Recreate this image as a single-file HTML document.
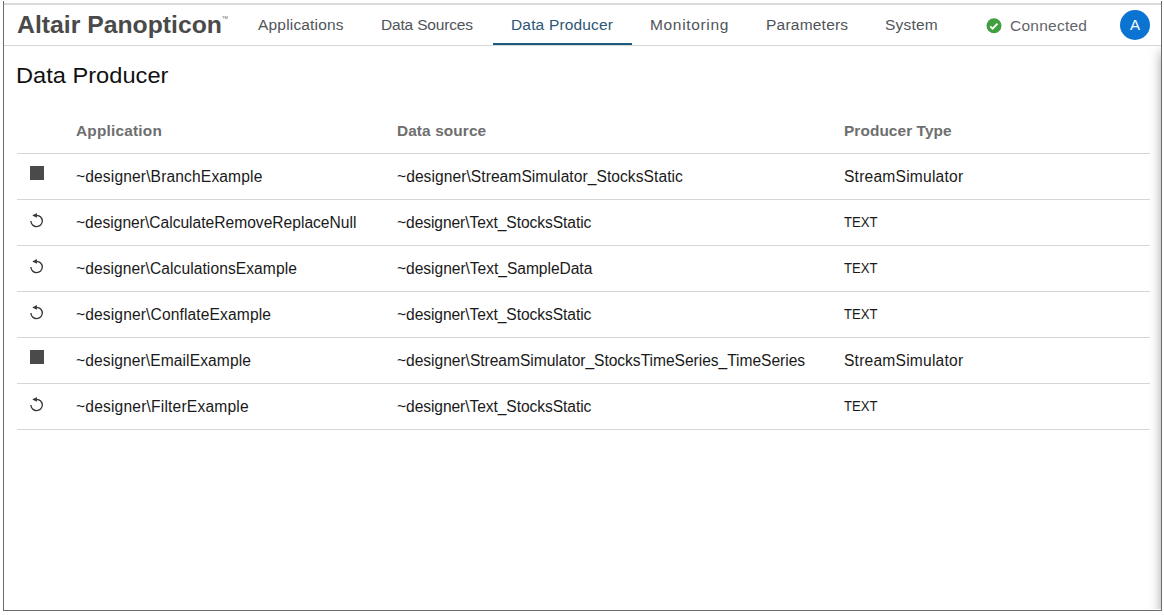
<!DOCTYPE html>
<html><head><meta charset="utf-8">
<style>
html,body{margin:0;padding:0;background:#fff;}
body{width:1164px;height:615px;position:relative;overflow:hidden;font-family:"Liberation Sans",sans-serif;}
.a{position:absolute;white-space:nowrap;line-height:1;}
#fl{position:absolute;left:3px;top:1px;width:1px;height:610px;background:#6b6b6b;}
#fr{position:absolute;left:1161px;top:1px;width:1px;height:610px;background:#6b6b6b;}
#fb{position:absolute;left:3px;top:610px;width:1159px;height:1px;background:#6b6b6b;}
#ftop{position:absolute;left:4px;top:3px;width:1157px;height:2px;background:#d8d9db;}
#navb{position:absolute;left:4px;top:45px;width:1157px;height:1px;background:#d2d6d8;}
#shadow{position:absolute;left:1130px;top:46px;width:31px;height:563px;overflow:hidden;}
#shadow div{position:absolute;left:31px;top:6px;width:40px;height:620px;background:#ccc;box-shadow:0 0 11px 0 rgba(0,0,0,0.36);}
.rb{position:absolute;left:17px;width:1133px;height:1px;background:#d6d6d6;}
.stop{position:absolute;left:30px;width:14px;height:14px;background:#4a4a4a;}
.ref{position:absolute;left:27px;width:20px;height:20px;}
</style></head><body>
<div id="ftop"></div>
<div id="navb"></div>
<div id="shadow"><div></div></div>
<div class="a" id="tm" style="left:222px;top:16px;font-size:4px;color:#555;">TM</div>
<div style="position:absolute;left:493px;top:43px;width:139px;height:2px;background:#1c5a80;"></div>
<svg style="position:absolute;left:986px;top:17.5px;" width="16" height="16" viewBox="0 0 16 16"><circle cx="8" cy="7.8" r="7.5" fill="#40a03f"/><path d="M4.3 8.3 L6.6 10.6 L11.5 5.7" stroke="#fff" stroke-width="1.9" fill="none" stroke-linecap="butt" stroke-linejoin="miter"/></svg>
<div style="position:absolute;left:1120px;top:10px;width:30px;height:30px;border-radius:50%;background:#0b73d2;"></div>
<div class="a" style="left:1127px;top:17.3px;width:16px;text-align:center;font-size:15px;color:#fff;">A</div>
<div class="rb" style="top:153px;"></div>
<div class="a" id="logo" style="left:17px;top:14px;font-size:23.5px;color:#4a4a4a;letter-spacing:0.000px;font-weight:bold;transform:scaleX(1.0533);transform-origin:0 0;">Altair Panopticon</div>
<div class="a" id="n1" style="left:258px;top:17px;font-size:15.5px;color:#4f5459;letter-spacing:0.182px;">Applications</div>
<div class="a" id="n2" style="left:381px;top:17px;font-size:15.5px;color:#4f5459;letter-spacing:-0.182px;">Data Sources</div>
<div class="a" id="n3" style="left:511px;top:17px;font-size:15.5px;color:#2c5676;letter-spacing:0.167px;">Data Producer</div>
<div class="a" id="n4" style="left:650px;top:17px;font-size:15.5px;color:#4f5459;letter-spacing:0.667px;">Monitoring</div>
<div class="a" id="n5" style="left:766px;top:17px;font-size:15.5px;color:#4f5459;letter-spacing:0.222px;">Parameters</div>
<div class="a" id="n6" style="left:885px;top:17px;font-size:15.5px;color:#4f5459;letter-spacing:0.200px;">System</div>
<div class="a" id="conn" style="left:1010px;top:18px;font-size:15.5px;color:#62666a;letter-spacing:0.250px;">Connected</div>
<div class="a" id="title" style="left:16px;top:65px;font-size:22px;color:#111;letter-spacing:0.000px;transform:scaleX(1.0743);transform-origin:0 0;">Data Producer</div>
<div class="a" id="h1" style="left:76px;top:123px;font-size:15.4px;color:#6e6e6e;letter-spacing:0.200px;font-weight:bold;">Application</div>
<div class="a" id="h2" style="left:397px;top:123px;font-size:15.4px;color:#6e6e6e;letter-spacing:0.100px;font-weight:bold;">Data source</div>
<div class="a" id="h3" style="left:844px;top:123px;font-size:15.4px;color:#6e6e6e;letter-spacing:0.083px;font-weight:bold;">Producer Type</div>
<div class="a" id="r0a" style="left:76px;top:169px;font-size:15.6px;color:#1a1a1a;letter-spacing:0.136px;">~designer\BranchExample</div>
<div class="a" id="r0d" style="left:397px;top:169px;font-size:15.6px;color:#1a1a1a;letter-spacing:0.054px;">~designer\StreamSimulator_StocksStatic</div>
<div class="a" id="r0t" style="left:844px;top:169px;font-size:15.6px;color:#1a1a1a;letter-spacing:0.214px;">StreamSimulator</div>
<div class="a" id="r1a" style="left:76px;top:215px;font-size:15.6px;color:#1a1a1a;letter-spacing:0.000px;">~designer\CalculateRemoveReplaceNull</div>
<div class="a" id="r1d" style="left:397px;top:215px;font-size:15.6px;color:#1a1a1a;letter-spacing:-0.077px;">~designer\Text_StocksStatic</div>
<div class="a" id="r1t" style="left:844px;top:214.4px;font-size:15px;color:#1a1a1a;letter-spacing:0.000px;transform:scaleX(0.8743);transform-origin:0 0;">TEXT</div>
<div class="a" id="r2a" style="left:76px;top:261px;font-size:15.6px;color:#1a1a1a;letter-spacing:0.071px;">~designer\CalculationsExample</div>
<div class="a" id="r2d" style="left:397px;top:261px;font-size:15.6px;color:#1a1a1a;letter-spacing:-0.042px;">~designer\Text_SampleData</div>
<div class="a" id="r2t" style="left:844px;top:260.4px;font-size:15px;color:#1a1a1a;letter-spacing:0.000px;transform:scaleX(0.8743);transform-origin:0 0;">TEXT</div>
<div class="a" id="r3a" style="left:76px;top:307px;font-size:15.6px;color:#1a1a1a;letter-spacing:0.125px;">~designer\ConflateExample</div>
<div class="a" id="r3d" style="left:397px;top:307px;font-size:15.6px;color:#1a1a1a;letter-spacing:-0.077px;">~designer\Text_StocksStatic</div>
<div class="a" id="r3t" style="left:844px;top:306.4px;font-size:15px;color:#1a1a1a;letter-spacing:0.000px;transform:scaleX(0.8743);transform-origin:0 0;">TEXT</div>
<div class="a" id="r4a" style="left:76px;top:353px;font-size:15.6px;color:#1a1a1a;letter-spacing:0.095px;">~designer\EmailExample</div>
<div class="a" id="r4d" style="left:397px;top:353px;font-size:15.6px;color:#1a1a1a;letter-spacing:-0.038px;">~designer\StreamSimulator_StocksTimeSeries_TimeSeries</div>
<div class="a" id="r4t" style="left:844px;top:353px;font-size:15.6px;color:#1a1a1a;letter-spacing:0.214px;">StreamSimulator</div>
<div class="a" id="r5a" style="left:76px;top:399px;font-size:15.6px;color:#1a1a1a;letter-spacing:0.182px;">~designer\FilterExample</div>
<div class="a" id="r5d" style="left:397px;top:399px;font-size:15.6px;color:#1a1a1a;letter-spacing:-0.077px;">~designer\Text_StocksStatic</div>
<div class="a" id="r5t" style="left:844px;top:398.4px;font-size:15px;color:#1a1a1a;letter-spacing:0.000px;transform:scaleX(0.8743);transform-origin:0 0;">TEXT</div>
<div class="stop" style="top:166px;"></div>
<div class="rb" style="top:199px;"></div>
<svg class="ref" style="top:210px;" viewBox="0 0 20 20"><path d="M3.9 11 A5.7 5.7 0 1 0 9.7 5.3" stroke="#333" stroke-width="1.3" fill="none"/><path d="M5.3 5.4 L9.9 3.0 L9.9 7.8 Z" fill="#333"/></svg>
<div class="rb" style="top:245px;"></div>
<svg class="ref" style="top:256px;" viewBox="0 0 20 20"><path d="M3.9 11 A5.7 5.7 0 1 0 9.7 5.3" stroke="#333" stroke-width="1.3" fill="none"/><path d="M5.3 5.4 L9.9 3.0 L9.9 7.8 Z" fill="#333"/></svg>
<div class="rb" style="top:291px;"></div>
<svg class="ref" style="top:302px;" viewBox="0 0 20 20"><path d="M3.9 11 A5.7 5.7 0 1 0 9.7 5.3" stroke="#333" stroke-width="1.3" fill="none"/><path d="M5.3 5.4 L9.9 3.0 L9.9 7.8 Z" fill="#333"/></svg>
<div class="rb" style="top:337px;"></div>
<div class="stop" style="top:350px;"></div>
<div class="rb" style="top:383px;"></div>
<svg class="ref" style="top:394px;" viewBox="0 0 20 20"><path d="M3.9 11 A5.7 5.7 0 1 0 9.7 5.3" stroke="#333" stroke-width="1.3" fill="none"/><path d="M5.3 5.4 L9.9 3.0 L9.9 7.8 Z" fill="#333"/></svg>
<div class="rb" style="top:429px;"></div>
<div id="fl"></div><div id="fr"></div><div id="fb"></div>
</body></html>
